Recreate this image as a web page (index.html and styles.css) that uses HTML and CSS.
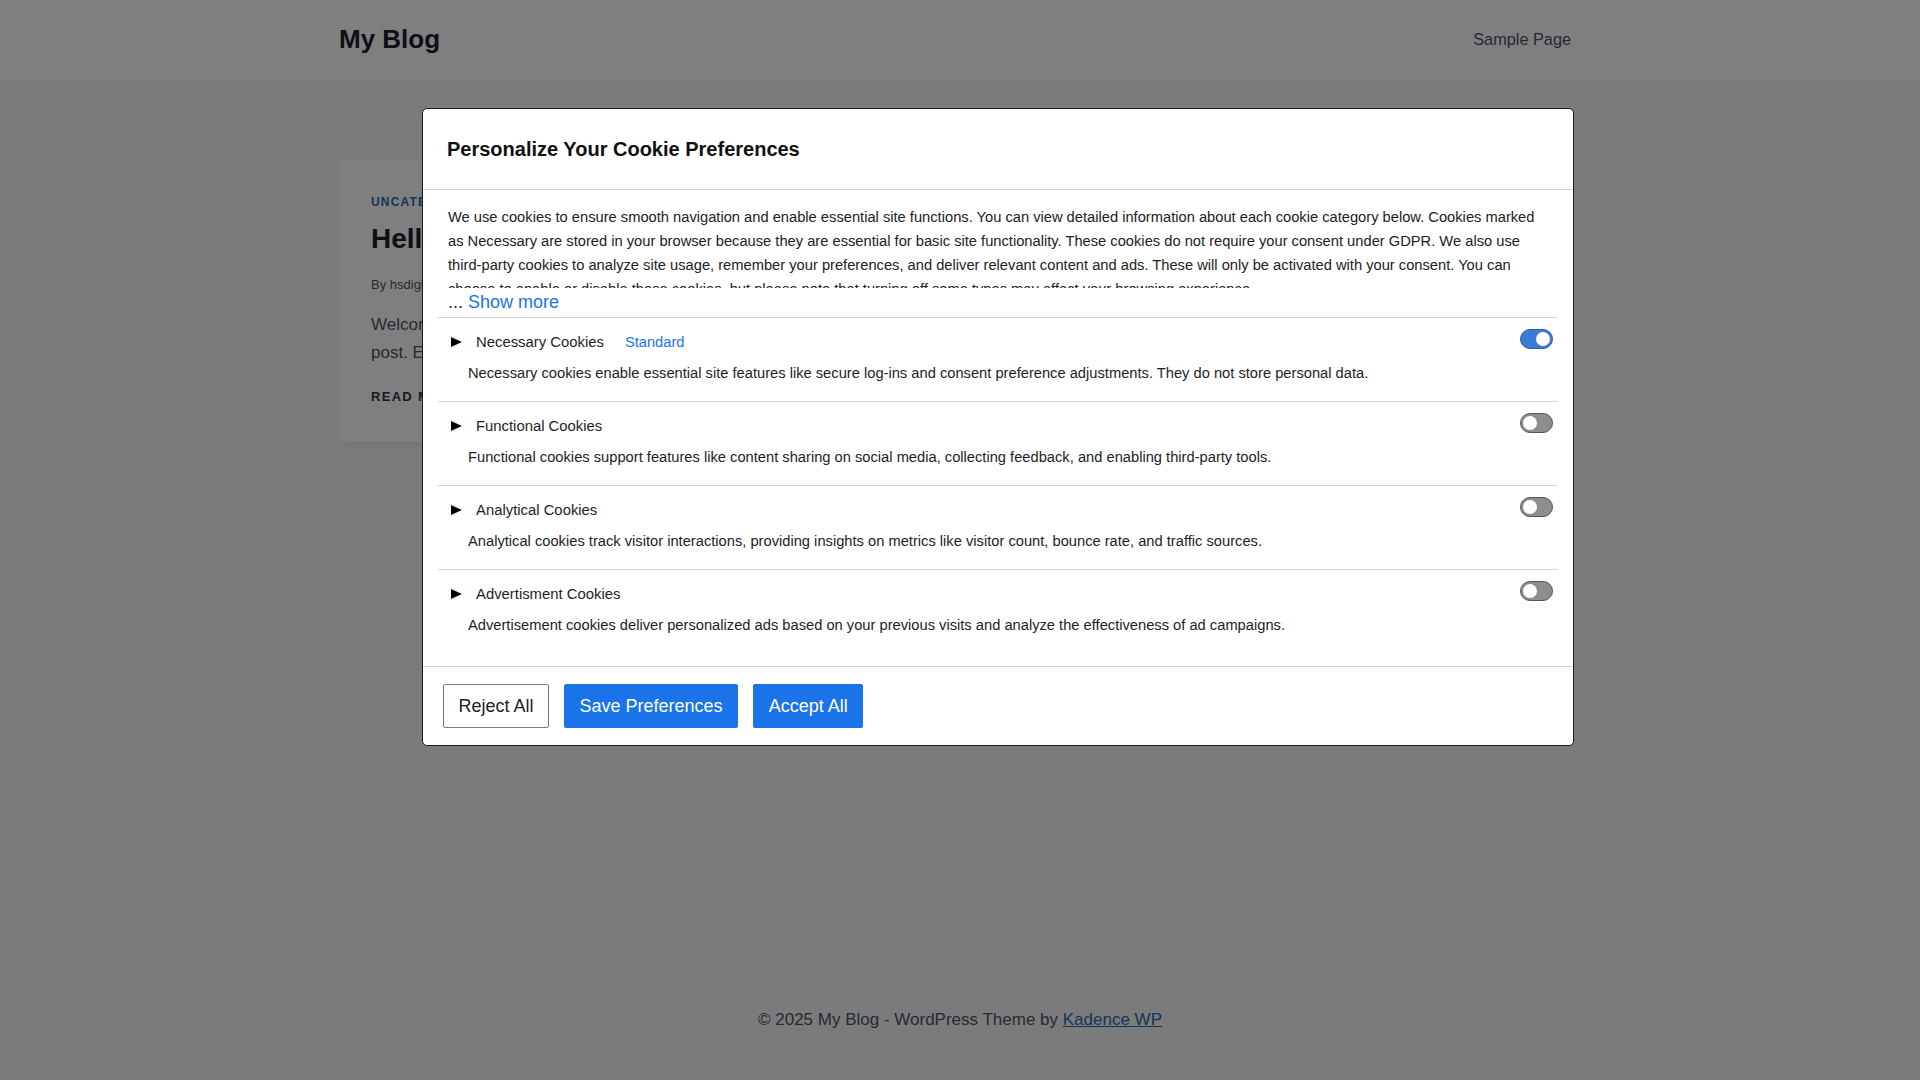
FILE: index.html
```html
<!DOCTYPE html>
<html lang="en">
<head>
<meta charset="utf-8">
<title>My Blog</title>
<link rel="stylesheet" href="styles.css">
</head>
<body>
<div class="site">
  <header class="site-header">
    <div class="container header-inner">
      <a class="site-title" href="#">My Blog</a>
      <nav class="main-nav"><a href="#">Sample Page</a></nav>
    </div>
  </header>
  <main class="site-main">
    <div class="container">
      <div class="post-grid">
        <article class="card">
          <div class="card-cat">Uncategorized</div>
          <h2 class="card-title">Hello world!</h2>
          <div class="card-meta">By hsdigitalsoft</div>
          <p class="card-excerpt">Welcome to WordPress. This is your first post. Edit or delete it, then start writing!</p>
          <div class="card-more">Read More</div>
        </article>
      </div>
    </div>
  </main>
  <footer class="site-footer">
    <div class="container">© 2025 My Blog - WordPress Theme by <a href="#">Kadence WP</a></div>
  </footer>
</div>

<div class="overlay"></div>

<div class="cookie-modal">
  <div class="cm-header">
    <h2 class="cm-title">Personalize Your Cookie Preferences</h2>
  </div>
  <div class="cm-body">
    <div class="cm-intro">We use cookies to ensure smooth navigation and enable essential site functions. You can view detailed information about each cookie category below. Cookies marked as Necessary are stored in your browser because they are essential for basic site functionality. These cookies do not require your consent under GDPR. We also use third-party cookies to analyze site usage, remember your preferences, and deliver relevant content and ads. These will only be activated with your consent. You can choose to enable or disable these cookies, but please note that turning off some types may affect your browsing experience.</div>
    <div class="cm-more">... <span class="show-more">Show more</span></div>

    <div class="cat-row">
      <div class="cat-head">
        <svg class="tri" width="11" height="10" viewBox="0 0 11 10"><polygon points="0,0 11,5 0,10" fill="#000"/></svg>
        <span class="cat-label">Necessary Cookies</span>
        <span class="cat-badge">Standard</span>
        <span class="toggle on"><span class="knob"></span></span>
      </div>
      <div class="cat-desc">Necessary cookies enable essential site features like secure log-ins and consent preference adjustments. They do not store personal data.</div>
    </div>

    <div class="cat-row">
      <div class="cat-head">
        <svg class="tri" width="11" height="10" viewBox="0 0 11 10"><polygon points="0,0 11,5 0,10" fill="#000"/></svg>
        <span class="cat-label">Functional Cookies</span>
        <span class="toggle"><span class="knob"></span></span>
      </div>
      <div class="cat-desc">Functional cookies support features like content sharing on social media, collecting feedback, and enabling third-party tools.</div>
    </div>

    <div class="cat-row">
      <div class="cat-head">
        <svg class="tri" width="11" height="10" viewBox="0 0 11 10"><polygon points="0,0 11,5 0,10" fill="#000"/></svg>
        <span class="cat-label">Analytical Cookies</span>
        <span class="toggle"><span class="knob"></span></span>
      </div>
      <div class="cat-desc">Analytical cookies track visitor interactions, providing insights on metrics like visitor count, bounce rate, and traffic sources.</div>
    </div>

    <div class="cat-row">
      <div class="cat-head">
        <svg class="tri" width="11" height="10" viewBox="0 0 11 10"><polygon points="0,0 11,5 0,10" fill="#000"/></svg>
        <span class="cat-label">Advertisment Cookies</span>
        <span class="toggle"><span class="knob"></span></span>
      </div>
      <div class="cat-desc">Advertisement cookies deliver personalized ads based on your previous visits and analyze the effectiveness of ad campaigns.</div>
    </div>
  </div>
  <div class="cm-footer">
    <button class="btn btn-reject">Reject All</button>
    <button class="btn btn-blue">Save Preferences</button>
    <button class="btn btn-blue">Accept All</button>
  </div>
</div>
</body>
</html>
```
FILE: styles.css
```css
html, body {
  margin: 0;
  padding: 0;
}
body {
  font-family: "Liberation Sans", Arial, sans-serif;
  background: #f7f7f9;
  color: #1a202c;
  width: 1920px;
  height: 1080px;
  overflow: hidden;
}
a { text-decoration: none; color: inherit; }

.site {
  display: flex;
  flex-direction: column;
  min-height: 1080px;
}
.container {
  max-width: 1290px;
  margin: 0 auto;
  padding: 0 24px;
  box-sizing: border-box;
  width: 100%;
}

/* header */
.site-header {
  background: #fff;
  height: 80px;
}
.header-inner {
  height: 78px;
  display: flex;
  align-items: center;
  justify-content: space-between;
}
.site-title {
  font-size: 26px;
  font-weight: 700;
  color: #1a202c;
}
.main-nav a {
  font-size: 16.3px;
  color: #4a5568;
  padding: 0 10px;
}

/* main */
.site-main {
  flex: 1;
  padding-top: 80px;
}
.post-grid {
  display: grid;
  grid-template-columns: repeat(3, 1fr);
  gap: 40px;
}
.card {
  background: #fff;
  padding: 34px 32px 37px;
  box-shadow: 0 7px 6px -4px rgba(0, 0, 0, 0.08);
}
.card-cat {
  font-size: 12px;
  line-height: 16px;
  font-weight: 700;
  letter-spacing: 0.1em;
  text-transform: uppercase;
  color: #2b6cb0;
}
.card-title {
  margin: 12px 0 0;
  font-size: 28px;
  line-height: 34px;
  font-weight: 700;
  color: #1a202c;
}
.card-meta {
  margin-top: 19px;
  font-size: 13px;
  line-height: 20px;
  color: #4a5568;
}
.card-excerpt {
  margin: 16px 0 0;
  font-size: 17px;
  line-height: 28px;
  color: #4a5568;
}
.card-more {
  margin-top: 22px;
  font-size: 13px;
  line-height: 16px;
  font-weight: 700;
  letter-spacing: 0.1em;
  text-transform: uppercase;
  color: #2d3748;
}

/* footer */
.site-footer {
  padding: 30px 0 47px;
  text-align: center;
  font-size: 17px;
  line-height: 26px;
  color: #4a5568;
}
.site-footer a {
  color: #2b6cb0;
  text-decoration: underline;
}

/* overlay */
.overlay {
  position: fixed;
  inset: 0;
  background: rgba(0, 0, 0, 0.5);
}

/* cookie modal */
.cookie-modal {
  position: absolute;
  left: 422px;
  top: 108px;
  width: 1152px;
  box-sizing: border-box;
  background: #fff;
  border: 1px solid #1c1c1c;
  border-radius: 5px;
  color: #222;
  font-family: "Liberation Sans", Arial, sans-serif;
}
.cm-header {
  padding: 24px;
  border-bottom: 1px solid #d4d4d4;
}
.cm-title {
  margin: 0;
  font-size: 20px;
  line-height: 32px;
  font-weight: 700;
  color: #111;
}
.cm-body {
  padding: 0 15px 13px;
}
.cm-intro {
  padding: 15px 10px 0;
  font-size: 14.7px;
  line-height: 24px;
  max-height: 83px;
  overflow: hidden;
}
.cm-more {
  padding: 2px 10px 0;
  margin-bottom: 3px;
  font-size: 18px;
  line-height: 24px;
  height: 24px;
  color: #222;
}
.show-more {
  color: #1a73e8;
}
.cat-row {
  border-top: 1px solid #d4d4d4;
  padding: 14px 5px 18px 13px;
}
.cat-head {
  display: flex;
  align-items: center;
  height: 20px;
}
.tri {
  flex: none;
  margin-right: 14px;
}
.cat-label {
  font-size: 14.85px;
  line-height: 20px;
  color: #1e1e1e;
}
.cat-badge {
  margin-left: 21px;
  font-size: 14.7px;
  line-height: 20px;
  color: #1a73e8;
}
.toggle {
  margin-left: auto;
  align-self: flex-start;
  margin-top: -3px;
  width: 33px;
  height: 20px;
  box-sizing: border-box;
  border-radius: 10px;
  border: 1px solid #555;
  background: #8e8e8e;
  display: flex;
  align-items: center;
  padding: 0 2px;
}
.toggle.on {
  background: #3a7bd5;
  border-color: #2a5ca8;
  justify-content: flex-end;
}
.knob {
  width: 14px;
  height: 14px;
  border-radius: 50%;
  background: #fff;
}
.cat-desc {
  margin: 11px 0 0 17px;
  font-size: 14.7px;
  line-height: 20px;
  color: #1e1e1e;
}
.cm-footer {
  border-top: 1px solid #d4d4d4;
  padding: 17px 20px;
  display: flex;
  gap: 15px;
}
.btn {
  height: 44px;
  padding: 0 14.5px;
  font-family: "Liberation Sans", Arial, sans-serif;
  font-size: 18px;
  border-radius: 2px;
  border: 1px solid;
  cursor: pointer;
}
.btn-reject {
  background: #fff;
  border-color: #7a7a7a;
  color: #1e1e1e;
}
.btn-blue {
  background: #1a73e8;
  border-color: #1a73e8;
  color: #fff;
}
```
